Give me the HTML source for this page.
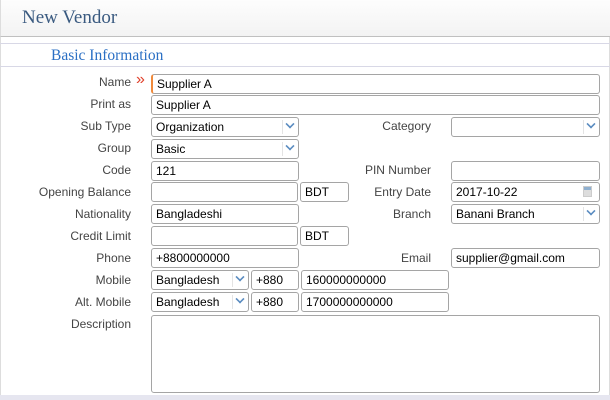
<!DOCTYPE html>
<html><head><style>
*{box-sizing:border-box;margin:0;padding:0}
body{width:610px;height:400px;background:#fff;font-family:"Liberation Sans",Tahoma,sans-serif;font-size:12px;color:#000;position:relative;overflow:hidden}
.hdr{position:absolute;left:0;top:0;width:610px;height:37px;background:linear-gradient(#fdfdfd,#f3f3f3);border-bottom:1px solid #c0c0c0;border-left:1px solid #ddd}
.hdr span{position:absolute;left:21px;top:7px;font-family:"Liberation Serif",serif;font-size:19px;color:#3a5a80}
.frame{position:absolute;left:0;top:37px;width:610px;height:363px;border-left:1px solid #ddd;border-right:1px solid #ddd}
.l1{position:absolute;left:0;top:43px;width:610px;height:1px;background:#d8d8e6}
.l2{position:absolute;left:0;top:66px;width:610px;height:1px;background:#d8d8e6}
.bi{position:absolute;left:51px;top:47px;font-family:"Liberation Serif",serif;font-size:15.5px;color:#2a6fc4}
.lb{position:absolute;width:120px;text-align:right;color:#444;font-size:12px}
.rl{position:absolute;width:120px;text-align:right;color:#444;font-size:12px}
.in{position:absolute;height:20px;border:1px solid #a5a5a5;border-radius:3px;background:#fff;padding:2px 0 0 4px;font-size:12px;white-space:nowrap;overflow:hidden}
.sel::after{content:"";position:absolute;right:4px;top:2px;width:6px;height:6px;border-right:2px solid #5b8cc0;border-bottom:2px solid #5b8cc0;transform:rotate(45deg) scale(.8)}
.sel::before{content:"";position:absolute;right:15px;top:2px;width:1px;height:14px;background:#e4e4e4}
.foot{position:absolute;left:0;top:395px;width:610px;height:5px;background:#e6e6f0}
</style></head><body>
<div class="hdr"><span>New Vendor</span></div>
<div class="frame"></div>
<div class="l1"></div>
<div class="bi">Basic Information</div>
<div class="l2"></div>

<div class="lb" style="left:11px;top:75px">Name</div>
<div style="position:absolute;left:136px;top:71px;color:#e0402a;font-size:16px">»</div>
<div class="in" style="left:151px;top:74px;width:449px;border-left:2px solid #f08a3c">Supplier A</div>

<div class="lb" style="left:11px;top:97px">Print as</div>
<div class="in" style="left:151px;top:95px;width:449px">Supplier A</div>

<div class="lb" style="left:11px;top:119px">Sub Type</div>
<div class="in sel" style="left:151px;top:117px;width:148px">Organization</div>
<div class="rl" style="left:311px;top:119px">Category</div>
<div class="in sel" style="left:451px;top:117px;width:149px"></div>

<div class="lb" style="left:11px;top:141px">Group</div>
<div class="in sel" style="left:151px;top:139px;width:148px">Basic</div>

<div class="lb" style="left:11px;top:163px">Code</div>
<div class="in" style="left:151px;top:161px;width:148px">121</div>
<div class="rl" style="left:311px;top:163px">PIN Number</div>
<div class="in" style="left:451px;top:161px;width:149px"></div>

<div class="lb" style="left:11px;top:185px">Opening Balance</div>
<div class="in" style="left:151px;top:182px;width:147px"></div>
<div class="in" style="left:300px;top:182px;width:49px">BDT</div>
<div class="rl" style="left:311px;top:185px">Entry Date</div>
<div class="in" style="left:451px;top:182px;width:149px">2017-10-22<span style="position:absolute;right:7px;top:3px;width:9px;height:11px;background:linear-gradient(#8fb0d0 0 3px,#ddd 3px);border:1px solid #ccc"></span></div>

<div class="lb" style="left:11px;top:207px">Nationality</div>
<div class="in" style="left:151px;top:204px;width:148px">Bangladeshi</div>
<div class="rl" style="left:311px;top:207px">Branch</div>
<div class="in sel" style="left:451px;top:204px;width:149px">Banani Branch</div>

<div class="lb" style="left:11px;top:229px">Credit Limit</div>
<div class="in" style="left:151px;top:226px;width:147px"></div>
<div class="in" style="left:300px;top:226px;width:49px">BDT</div>

<div class="lb" style="left:11px;top:251px">Phone</div>
<div class="in" style="left:151px;top:248px;width:148px">+8800000000</div>
<div class="rl" style="left:311px;top:251px">Email</div>
<div class="in" style="left:451px;top:248px;width:149px">supplier@gmail.com</div>

<div class="lb" style="left:11px;top:273px">Mobile</div>
<div class="in sel" style="left:151px;top:270px;width:98px">Bangladesh</div>
<div class="in" style="left:251px;top:270px;width:48px">+880</div>
<div class="in" style="left:301px;top:270px;width:148px">160000000000</div>

<div class="lb" style="left:11px;top:295px">Alt. Mobile</div>
<div class="in sel" style="left:151px;top:292px;width:98px">Bangladesh</div>
<div class="in" style="left:251px;top:292px;width:48px">+880</div>
<div class="in" style="left:301px;top:292px;width:148px">1700000000000</div>

<div class="lb" style="left:11px;top:317px">Description</div>
<div class="in" style="left:151px;top:315px;width:449px;height:78px"></div>

<div class="foot"></div>
</body></html>
